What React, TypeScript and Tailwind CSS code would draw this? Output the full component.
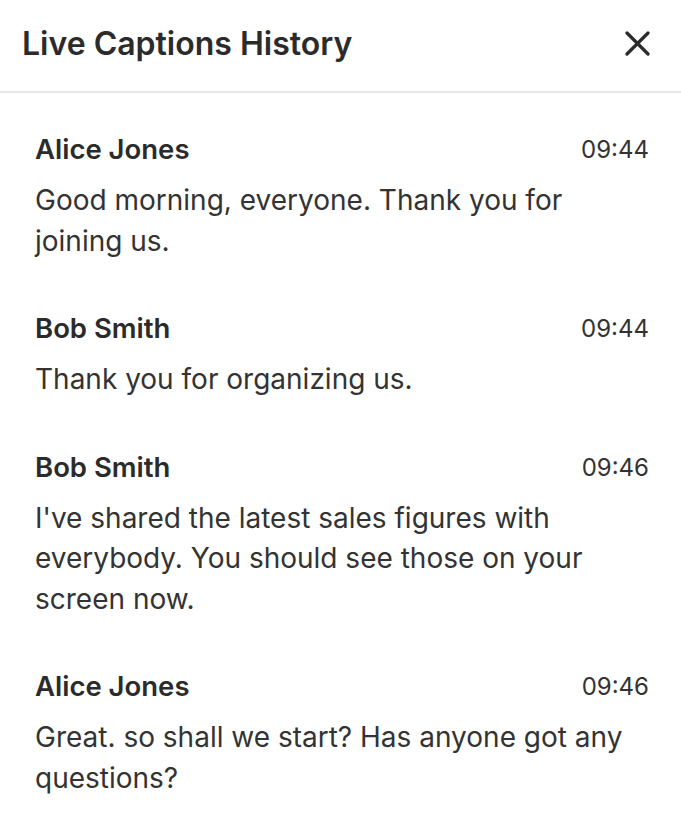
const captions = [
  {
    name: "Alice Jones",
    time: "09:44",
    text: "Good morning, everyone. Thank you for joining us.",
  },
  { name: "Bob Smith", time: "09:44", text: "Thank you for organizing us." },
  {
    name: "Bob Smith",
    time: "09:46",
    text: "I've shared the latest sales figures with everybody. You should see those on your screen now.",
  },
  {
    name: "Alice Jones",
    time: "09:46",
    text: "Great. so shall we start? Has anyone got any questions?",
  },
];

export default function App() {
  return (
    <div className="w-[681px] h-[828px] bg-white text-[#333] font-['Inter','Noto_Sans',sans-serif] overflow-hidden">
      <header className="h-[93px] flex items-center justify-between pl-[22px] pr-[31px] pb-[4px] border-b-2 border-[#e6e6e6]">
        <h1 className="text-[32px] font-semibold text-[#2b2b2b]">
          Live Captions History
        </h1>
        <button className="text-[#2b2b2b]">
          <svg width="25" height="25" viewBox="0 0 25 25" fill="none" stroke="currentColor" strokeWidth="3.2" strokeLinecap="round">
            <path d="M2 2L23 23M23 2L2 23" />
          </svg>
        </button>
      </header>

      <ul className="pl-[35px] pr-[32px] pt-[37px] space-y-[48px]">
        {captions.map((c, i) => (
          <li key={i}>
            <div className="flex items-center justify-between h-[40px]">
              <span className="text-[27.5px] font-semibold text-[#2b2b2b]">
                {c.name}
              </span>
              <span className="text-[24px]">{c.time}</span>
            </div>
            <p className="mt-[10px] text-[28px] leading-[40.5px] pr-[14px]">
              {c.text}
            </p>
          </li>
        ))}
      </ul>
    </div>
  );
}
